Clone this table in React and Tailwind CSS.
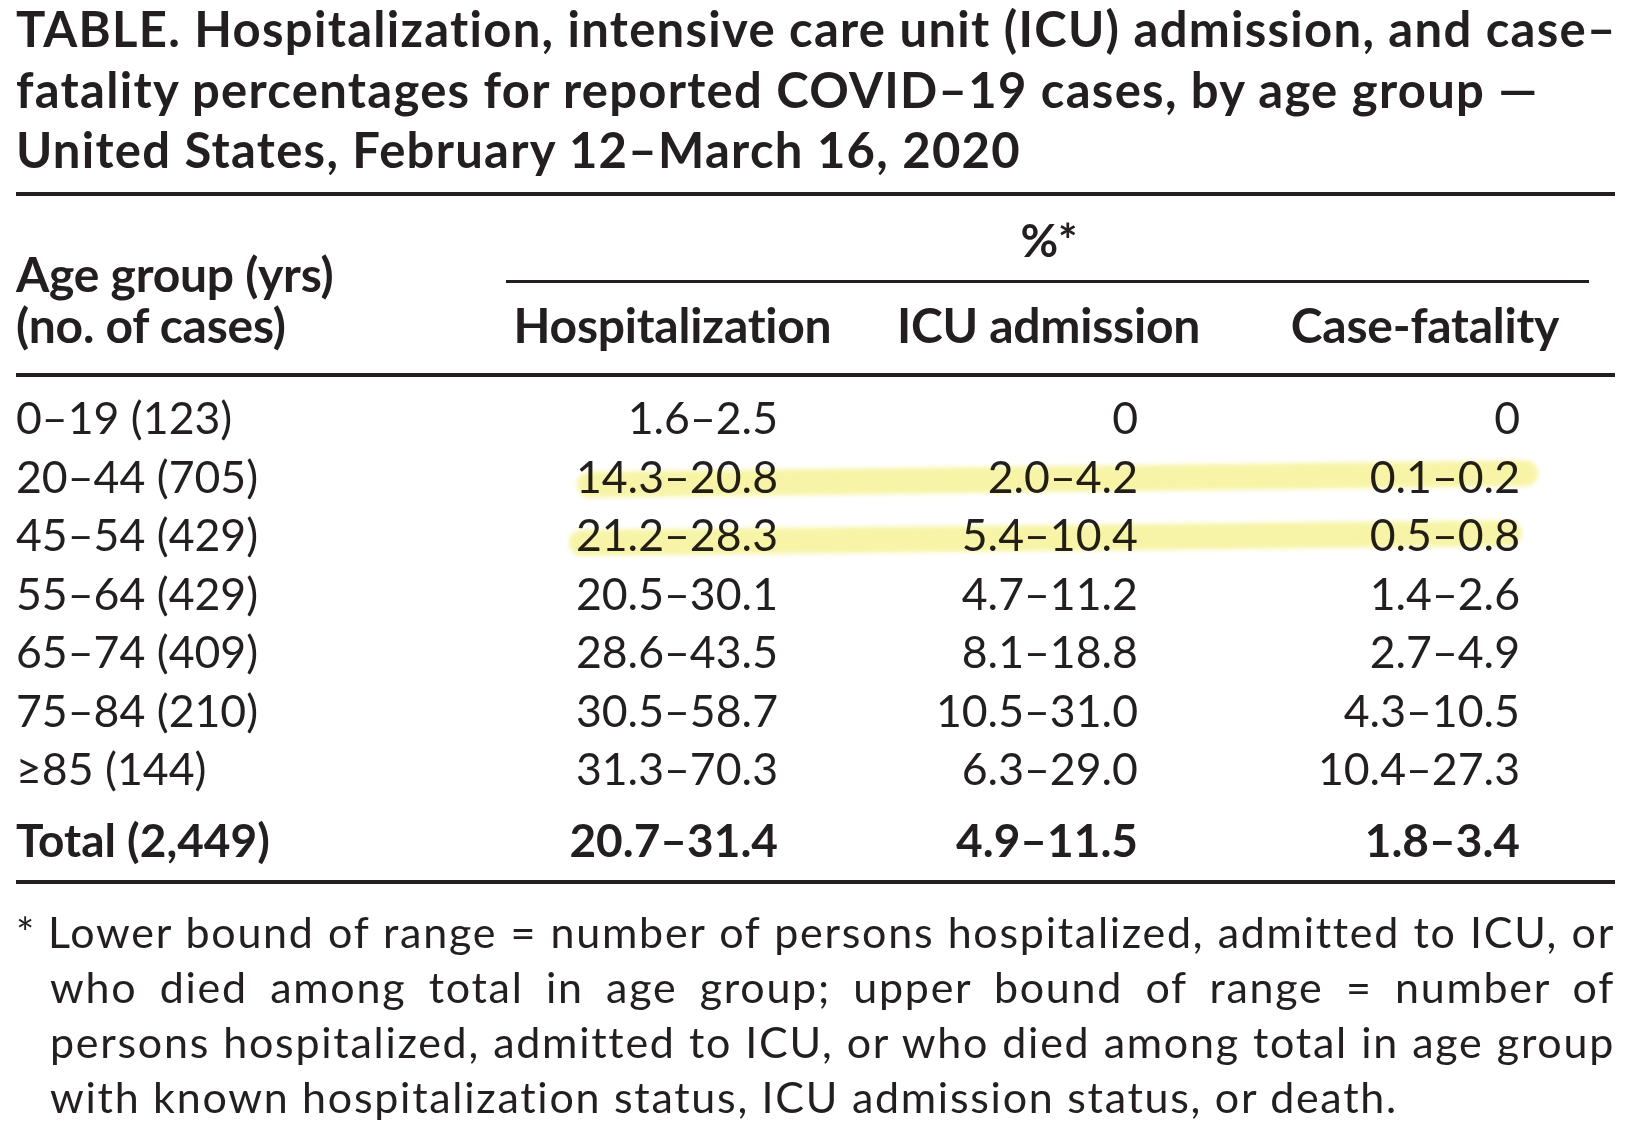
import React from "react";

const rows = [
  { age: "0–19 (123)", hosp: "1.6–2.5", icu: "0", cf: "0" },
  {
    age: "20–44 (705)",
    hosp: "14.3–20.8",
    icu: "2.0–4.2",
    cf: "0.1–0.2",
    mark: "left-[561px] top-[19px] w-[961px] -rotate-[0.7deg]",
  },
  {
    age: "45–54 (429)",
    hosp: "21.2–28.3",
    icu: "5.4–10.4",
    cf: "0.5–0.8",
    mark: "left-[553px] top-[20px] w-[953px] -rotate-[0.6deg]",
  },
  { age: "55–64 (429)", hosp: "20.5–30.1", icu: "4.7–11.2", cf: "1.4–2.6" },
  { age: "65–74 (409)", hosp: "28.6–43.5", icu: "8.1–18.8", cf: "2.7–4.9" },
  { age: "75–84 (210)", hosp: "30.5–58.7", icu: "10.5–31.0", cf: "4.3–10.5" },
  { age: "≥85 (144)", hosp: "31.3–70.3", icu: "6.3–29.0", cf: "10.4–27.3" },
];

const cols = "grid grid-cols-[467px_379px_373px_380px]";

export default function App() {
  return (
    <div className="w-[1652px] h-[1138px] overflow-hidden bg-white text-[#231f20] font-['Lato','Open_Sans',sans-serif]">
      <div className="ml-[16px] w-[1599px]">
        {/* title */}
        <h1 className="-mt-[2px] text-[49px] leading-[60.5px] font-bold tracking-[0.026em] whitespace-nowrap">
          TABLE. Hospitalization, intensive care unit (ICU) admission, and case–
          <br />
          fatality percentages for reported COVID–19 cases, by age group —
          <br />
          United States, February 12–March 16, 2020
        </h1>

        <div className="mt-[12px] h-[4px] bg-[#231f20]" />

        {/* column heads */}
        <div className="flex h-[177px]">
          <div className="w-[467px] flex flex-col justify-end pb-[22.5px] text-[48px] leading-[51px] font-bold tracking-[-0.005em]">
            <div>Age group (yrs)</div>
            <div>(no. of cases)</div>
          </div>
          <div className="flex-1 flex flex-col pt-[18.5px]">
            <div className="text-center text-[46px] leading-[51px] font-bold">%*</div>
            <div className="mt-[14.5px] ml-[23px] mr-[26px] h-[3px] bg-[#231f20]" />
            <div className="mt-[16.5px] grid grid-cols-[379px_373px_380px] text-[48px] leading-[51px] font-bold tracking-[-0.005em] text-center">
              <div>Hospitalization</div>
              <div>ICU admission</div>
              <div>Case-fatality</div>
            </div>
          </div>
        </div>

        <div className="h-[4px] bg-[#231f20]" />

        {/* body */}
        <div className="mt-[11.5px] text-[44.6px] leading-[58.5px]">
          {rows.map((r) => (
            <div key={r.age} className={`relative ${cols}`}>
              {r.mark && (
                <div
                  className={`absolute h-[26px] rounded-full bg-[#f4f18a] opacity-75 blur-[2px] mix-blend-multiply ${r.mark}`}
                />
              )}
              <div className="whitespace-nowrap">{r.age}</div>
              <div className="text-right pr-[84px]">{r.hosp}</div>
              <div className="text-right pr-[97px]">{r.icu}</div>
              <div className="text-right pr-[95px]">{r.cf}</div>
            </div>
          ))}
        </div>

        <div className={`mt-[13.5px] mb-[10px] ${cols} text-[46px] leading-[58.5px] font-bold`}>
          <div>Total (2,449)</div>
          <div className="text-right pr-[84px]">20.7–31.4</div>
          <div className="text-right pr-[97px]">4.9–11.5</div>
          <div className="text-right pr-[95px]">1.8–3.4</div>
        </div>

        <div className="h-[4px] bg-[#231f20]" />

        {/* footnote */}
        <div className="mt-[20px] text-[43px] leading-[55px] tracking-[0.04em]">
          <div className="flex">
            <span className="w-[32px] tracking-normal">*</span>
            <span className="flex-1 text-justify [text-align-last:justify]">
              Lower bound of range = number of persons hospitalized, admitted to ICU, or
            </span>
          </div>
          <div className="pl-[34px] text-justify [text-align-last:justify]">
            who died among total in age group; upper bound of range = number of
          </div>
          <div className="pl-[34px] text-justify [text-align-last:justify]">
            persons hospitalized, admitted to ICU, or who died among total in age group
          </div>
          <div className="pl-[34px] whitespace-nowrap">
            with known hospitalization status, ICU admission status, or death.
          </div>
        </div>
      </div>
    </div>
  );
}
